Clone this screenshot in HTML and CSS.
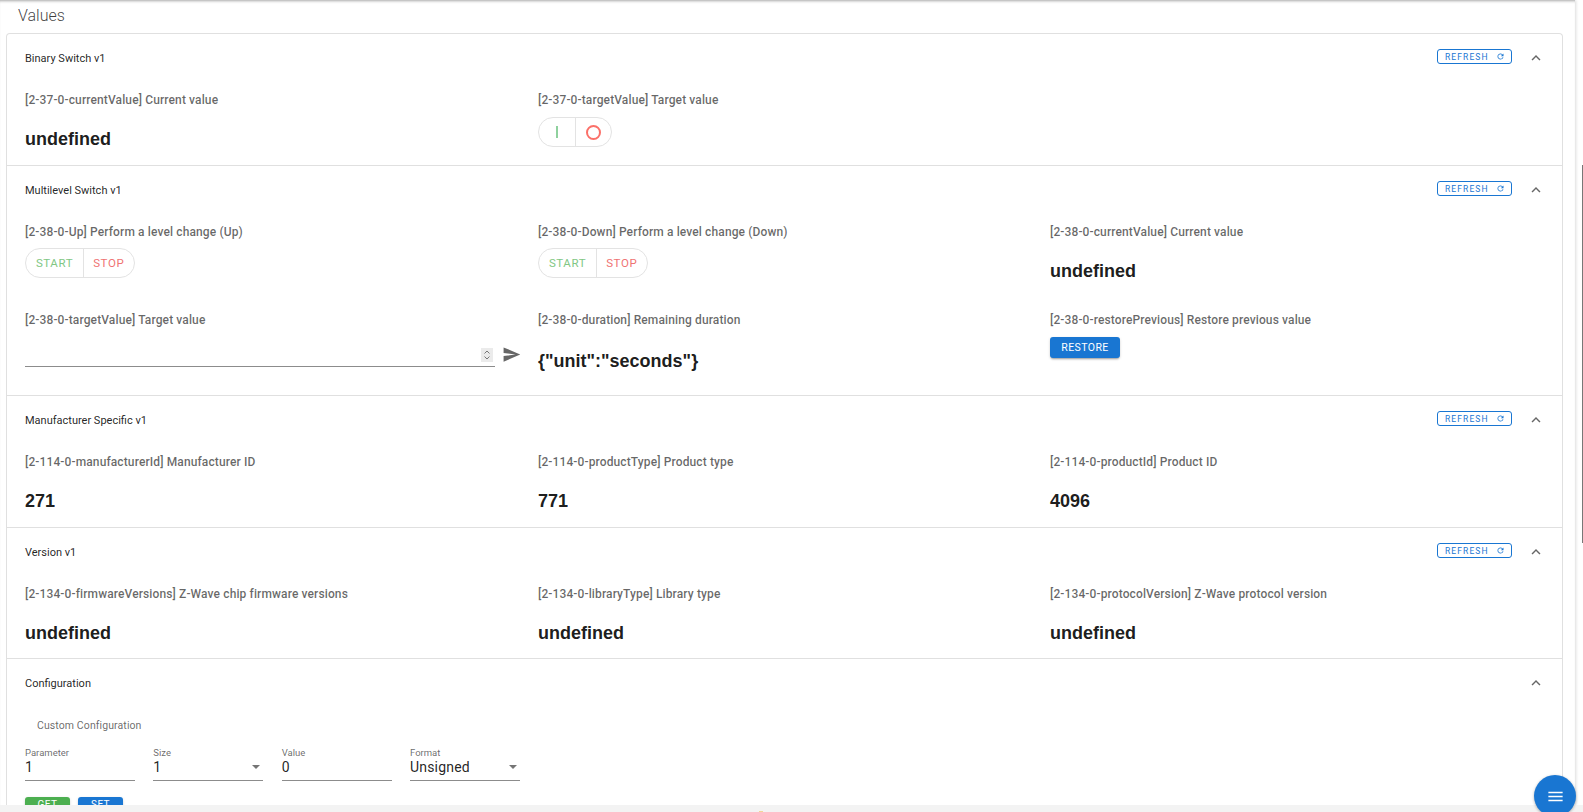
FILE: index.html
```html
<!DOCTYPE html>
<html lang="en">
<head>
<meta charset="utf-8">
<title>Values</title>
<link rel="stylesheet" href="styles.css">
</head>
<body>
<div class="page">
  <main class="main">
    <h2 class="heading">Values</h2>
    <div class="card">
      <section class="section s-binary">
        <header class="sec-head">
          <span class="sec-title">Binary Switch v1</span>
          <button class="refresh">REFRESH <svg viewBox="0 0 24 24" class="ref-ic"><path d="M17.65 6.35A7.958 7.958 0 0 0 12 4c-4.42 0-7.99 3.58-7.99 8s3.57 8 7.99 8c3.73 0 6.84-2.55 7.73-6h-2.08A5.99 5.99 0 0 1 12 18c-3.31 0-6-2.69-6-6s2.69-6 6-6c1.66 0 3.14.69 4.22 1.78L13 11h7V4l-2.35 2.35z"/></svg></button>
          <svg class="chev" viewBox="0 0 24 24"><path d="M12 8l-6 6 1.41 1.41L12 10.83l4.59 4.58L18 14z"/></svg>
        </header>
        <div class="grid">
          <div class="cell"><div class="label">[2-37-0-currentValue] Current value</div><div class="value">undefined</div></div>
          <div class="cell"><div class="label">[2-37-0-targetValue] Target value</div>
            <div class="pill">
              <span class="seg seg-on"><i class="bar"></i></span>
              <span class="seg seg-off"><i class="ring"></i></span>
            </div>
          </div>
        </div>
      </section>

      <section class="section s-multi">
        <header class="sec-head">
          <span class="sec-title">Multilevel Switch v1</span>
          <button class="refresh">REFRESH <svg viewBox="0 0 24 24" class="ref-ic"><path d="M17.65 6.35A7.958 7.958 0 0 0 12 4c-4.42 0-7.99 3.58-7.99 8s3.57 8 7.99 8c3.73 0 6.84-2.55 7.73-6h-2.08A5.99 5.99 0 0 1 12 18c-3.31 0-6-2.69-6-6s2.69-6 6-6c1.66 0 3.14.69 4.22 1.78L13 11h7V4l-2.35 2.35z"/></svg></button>
          <svg class="chev" viewBox="0 0 24 24"><path d="M12 8l-6 6 1.41 1.41L12 10.83l4.59 4.58L18 14z"/></svg>
        </header>
        <div class="grid grid-two">
          <div class="cell"><div class="label">[2-38-0-Up] Perform a level change (Up)</div>
            <div class="pill"><span class="seg seg-start">START</span><span class="seg seg-stop">STOP</span></div>
          </div>
          <div class="cell"><div class="label">[2-38-0-Down] Perform a level change (Down)</div>
            <div class="pill"><span class="seg seg-start">START</span><span class="seg seg-stop">STOP</span></div>
          </div>
          <div class="cell"><div class="label">[2-38-0-currentValue] Current value</div><div class="value">undefined</div></div>
          <div class="cell"><div class="label">[2-38-0-targetValue] Target value</div>
            <div class="num-row">
              <div class="num-field">
                <span class="spin"><svg viewBox="0 0 12 14"><path d="M3.500 5.500 6 3l2.500 2.500M3.500 8.500 6 11l2.500-2.500"/></svg></span>
              </div>
              <svg class="send" viewBox="0 0 24 24"><path d="M2.01 21 23 12 2.01 3 2 10l15 2-15 2z"/></svg>
            </div>
          </div>
          <div class="cell"><div class="label">[2-38-0-duration] Remaining duration</div><div class="value value-low">{"unit":"seconds"}</div></div>
          <div class="cell"><div class="label">[2-38-0-restorePrevious] Restore previous value</div><button class="btn btn-blue btn-restore">RESTORE</button></div>
        </div>
      </section>

      <section class="section s-maker">
        <header class="sec-head">
          <span class="sec-title">Manufacturer Specific v1</span>
          <button class="refresh">REFRESH <svg viewBox="0 0 24 24" class="ref-ic"><path d="M17.65 6.35A7.958 7.958 0 0 0 12 4c-4.42 0-7.99 3.58-7.99 8s3.57 8 7.99 8c3.73 0 6.84-2.55 7.73-6h-2.08A5.99 5.99 0 0 1 12 18c-3.31 0-6-2.69-6-6s2.69-6 6-6c1.66 0 3.14.69 4.22 1.78L13 11h7V4l-2.35 2.35z"/></svg></button>
          <svg class="chev" viewBox="0 0 24 24"><path d="M12 8l-6 6 1.41 1.41L12 10.83l4.59 4.58L18 14z"/></svg>
        </header>
        <div class="grid">
          <div class="cell"><div class="label">[2-114-0-manufacturerId] Manufacturer ID</div><div class="value">271</div></div>
          <div class="cell"><div class="label">[2-114-0-productType] Product type</div><div class="value">771</div></div>
          <div class="cell"><div class="label">[2-114-0-productId] Product ID</div><div class="value">4096</div></div>
        </div>
      </section>

      <section class="section s-version">
        <header class="sec-head">
          <span class="sec-title">Version v1</span>
          <button class="refresh">REFRESH <svg viewBox="0 0 24 24" class="ref-ic"><path d="M17.65 6.35A7.958 7.958 0 0 0 12 4c-4.42 0-7.99 3.58-7.99 8s3.57 8 7.99 8c3.73 0 6.84-2.55 7.73-6h-2.08A5.99 5.99 0 0 1 12 18c-3.31 0-6-2.69-6-6s2.69-6 6-6c1.66 0 3.14.69 4.22 1.78L13 11h7V4l-2.35 2.35z"/></svg></button>
          <svg class="chev" viewBox="0 0 24 24"><path d="M12 8l-6 6 1.41 1.41L12 10.83l4.59 4.58L18 14z"/></svg>
        </header>
        <div class="grid">
          <div class="cell"><div class="label">[2-134-0-firmwareVersions] Z-Wave chip firmware versions</div><div class="value">undefined</div></div>
          <div class="cell"><div class="label">[2-134-0-libraryType] Library type</div><div class="value">undefined</div></div>
          <div class="cell"><div class="label">[2-134-0-protocolVersion] Z-Wave protocol version</div><div class="value">undefined</div></div>
        </div>
      </section>

      <section class="section s-config">
        <header class="sec-head">
          <span class="sec-title">Configuration</span>
          <svg class="chev" viewBox="0 0 24 24"><path d="M12 8l-6 6 1.41 1.41L12 10.83l4.59 4.58L18 14z"/></svg>
        </header>
        <div class="custom">Custom Configuration</div>
        <div class="fields">
          <div class="field"><span class="f-label">Parameter</span><span class="f-value">1</span></div>
          <div class="field"><span class="f-label">Size</span><span class="f-value">1</span><i class="caret"></i></div>
          <div class="field"><span class="f-label">Value</span><span class="f-value">0</span></div>
          <div class="field"><span class="f-label">Format</span><span class="f-value">Unsigned</span><i class="caret"></i></div>
        </div>
        <div class="actions">
          <button class="btn btn-green btn-small">GET</button>
          <button class="btn btn-blue btn-small">SET</button>
        </div>
      </section>
    </div>
  </main>
  <footer class="foot"><i class="foot-dot"></i></footer>
</div>
<i class="scroll-thumb"></i>
<button class="fab" aria-label="Menu"><svg viewBox="0 0 24 24"><path d="M3 18h18v-2H3v2zm0-5h18v-2H3v2zm0-7v2h18V6H3z"/></svg></button>
</body>
</html>
```
FILE: styles.css
```css
* { box-sizing: border-box; }
html, body { margin: 0; height: 100%; overflow: hidden; background: #fff; }
body { font-family: Roboto, "Liberation Sans", sans-serif; color: rgba(0,0,0,.87); }
button { font-family: inherit; }

.page { height: 812px; display: flex; flex-direction: column; }
.main {
  height: 805px;
  width: 1575px;
  overflow: hidden;
  padding: 0 12px 0 6px;
  background: #fff;
  box-shadow: inset 0 3px 3px -2px rgba(0,0,0,.35), 1px 0 3px rgba(0,0,0,.14);
}
.foot { position: relative; height: 7px; background: #f3f3f3; }
.foot-dot { position: absolute; left: 759px; bottom: 0; width: 4px; height: 1px; background: #f2d596; }
.scroll-thumb { position: fixed; left: 1582px; top: 165px; width: 1px; height: 378px; background: #777; }

.heading { margin: 0; height: 33px; padding: 6px 0 0 12px; font-size: 16px; line-height: 20px; font-weight: 300; color: rgba(0,0,0,.75); }

.card { border: 1px solid #e0e0e0; border-radius: 4px 4px 0 0; border-bottom: 0; }
.section { border-bottom: 1px solid #e0e0e0; padding-left: 18px; }
.s-binary { height: 132px; }
.s-multi { height: 230px; }
.s-maker { height: 132px; }
.s-version { height: 131px; }
.s-config { border-bottom: 0; }

.sec-head { height: 49px; display: flex; align-items: center; padding: 0 17px 1px 0; }
.sec-title { font-size: 11px; color: rgba(0,0,0,.87); flex: 1; }
.refresh {
  width: 75px; height: 15px; padding: 0 6px 0 7px;
  border: 1px solid #1976d2; border-radius: 3px; background: #fff; color: #1976d2;
  font-size: 8.500px; letter-spacing: 1.100px; display: flex; align-items: center; justify-content: space-between;
  margin-top: -3px;
}
.ref-ic { width: 9px; height: 9px; fill: #1976d2; }
.chev { width: 18px; height: 18px; fill: rgba(0,0,0,.6); margin-left: 15px; }

.grid { display: grid; grid-template-columns: 513px 512px 1fr; }
.grid-two .cell { height: 88px; }
.cell { padding-top: 9px; min-width: 0; }
.label { font-size: 12px; line-height: 16px; font-weight: 500; letter-spacing: .12px; color: rgba(0,0,0,.6); }
.value { margin-top: 20px; font-family: "Liberation Sans", Arial, sans-serif; font-size: 18px; line-height: 22px; font-weight: 700; color: rgba(0,0,0,.9); }
.value-low { margin-top: 22px; }

.pill { display: inline-flex; margin-top: 9px; height: 30px; border: 1px solid #e3e3e3; border-radius: 15px; }
.grid-two .pill { margin-top: 8px; }
.seg { display: flex; align-items: center; justify-content: center; font-size: 11.500px; letter-spacing: .6px; }
.seg + .seg { border-left: 1px solid #e3e3e3; }
.seg-on { width: 36px; }
.seg-off { width: 36px; }
.seg-start { width: 57px; color: #81c784; }
.seg-stop { width: 50.500px; color: #ef7373; }
.bar { width: 2px; height: 12px; background: #8fd19e; }
.ring { width: 15px; height: 15px; border: 2px solid #fb7069; border-radius: 50%; }

.num-row { display: flex; align-items: flex-start; margin-top: 14px; }
.num-field { width: 470px; height: 25px; border-bottom: 1px solid #8c8c8c; display: flex; justify-content: flex-end; padding: 6px 2px 0 0; }
.spin { width: 12px; height: 14px; background: #ebebeb; display: block; }
.spin svg { display: block; width: 12px; height: 14px; fill: none; stroke: #777; stroke-width: 1; }
.send { width: 19px; height: 19px; fill: #666; margin: 3px 0 0 7px; }

.btn { border: 0; border-radius: 3px; color: #fff; box-shadow: 0 2px 2px -1px rgba(0,0,0,.3), 0 1px 3px rgba(0,0,0,.15); padding: 0; letter-spacing: .4px; }
.btn-blue { background: #1976d2; }
.btn-green { background: #4caf50; }
.btn-restore { display: block; margin-top: 9px; width: 70px; height: 21px; font-size: 10.500px; }
.btn-small { width: 45px; height: 21px; font-size: 10px; line-height: 10px; padding-top: 3px; display: flex; justify-content: center; align-items: flex-start; }

.custom { padding: 10px 0 0 12px; font-size: 10.500px; line-height: 16px; color: rgba(0,0,0,.6); letter-spacing: .1px; }
.fields { display: flex; gap: 18.333px; margin-top: 13px; }
.field { position: relative; width: 110px; height: 34px; border-bottom: 1px solid #8c8c8c; display: flex; flex-direction: column; }
.f-label { font-size: 9.500px; line-height: 12px; color: rgba(0,0,0,.6); }
.f-value { font-size: 14px; line-height: 19px; margin-top: -1px; color: rgba(0,0,0,.87); letter-spacing: .2px; }
.caret { position: absolute; right: 3px; top: 18px; border: 4px solid transparent; border-top: 4px solid rgba(0,0,0,.54); }
.actions { display: flex; gap: 8px; margin-top: 16px; }

.fab {
  position: fixed; left: 1534px; top: 775px; width: 42px; height: 42px; border-radius: 50%; border: 0;
  background: #1976d2; padding: 11.500px; box-shadow: 0 1px 3px rgba(0,0,0,.3);
}
.fab svg { display: block; width: 19px; height: 19px; fill: #fff; }
```
